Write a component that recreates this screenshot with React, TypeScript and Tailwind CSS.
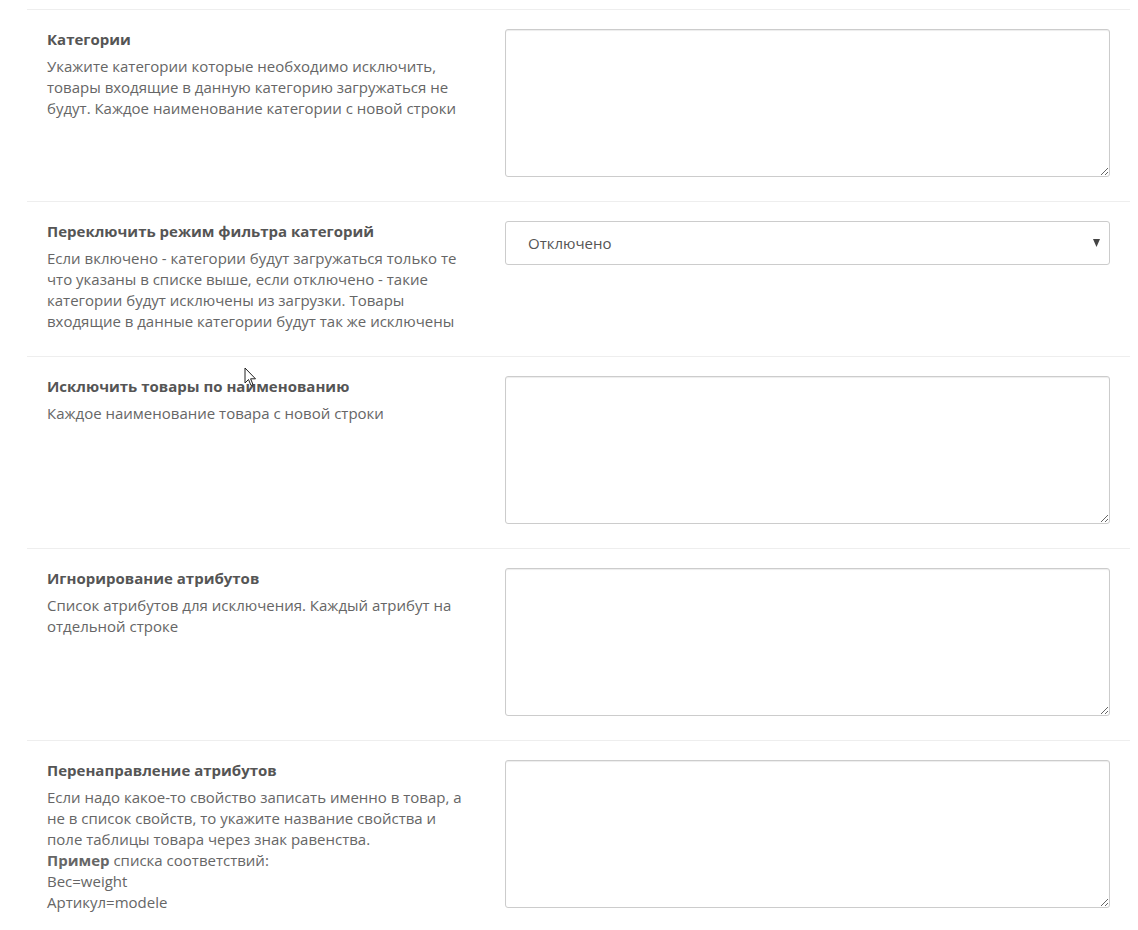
import React from 'react';

type Row = {
  title: string;
  description: React.ReactNode;
  field: 'textarea' | 'select';
};

const rows: Row[] = [
  {
    title: 'Категории',
    description:
      'Укажите категории которые необходимо исключить, товары входящие в данную категорию загружаться не будут. Каждое наименование категории с новой строки',
    field: 'textarea',
  },
  {
    title: 'Переключить режим фильтра категорий',
    description:
      'Если включено - категории будут загружаться только те что указаны в списке выше, если отключено - такие категории будут исключены из загрузки. Товары входящие в данные категории будут так же исключены',
    field: 'select',
  },
  {
    title: 'Исключить товары по наименованию',
    description: 'Каждое наименование товара с новой строки',
    field: 'textarea',
  },
  {
    title: 'Игнорирование атрибутов',
    description: 'Список атрибутов для исключения. Каждый атрибут на отдельной строке',
    field: 'textarea',
  },
  {
    title: 'Перенаправление атрибутов',
    description: (
      <>
        Если надо какое-то свойство записать именно в товар, а не в список свойств, то укажите название свойства и
        поле таблицы товара через знак равенства.
        <br />
        <b className="font-bold">Пример</b> списка соответствий:
        <br />
        Вес=weight
        <br />
        Артикул=modele
      </>
    ),
    field: 'textarea',
  },
];

const Cursor: React.FC = () => (
  <svg className="absolute left-[244px] top-[367px] pointer-events-none" width="13" height="20" viewBox="0 0 13 20">
    <path d="M1 1 L1 16 L4.5 12.5 L7 18.5 L9 17.6 L6.6 11.8 L11.5 11.8 Z" fill="#fff" stroke="#222" strokeWidth="1" strokeLinejoin="round" />
  </svg>
);

const App: React.FC = () => {
  return (
    <div className="relative min-h-[930px] bg-white pt-[9px] text-[15px] text-[#666]" style={{ fontFamily: '"Open Sans", "Liberation Sans", sans-serif' }}>
      <div className="ml-[27px] mr-[8px]">
        {rows.map((row, i) => (
          <div key={i} className="grid grid-cols-[458px_1fr] border-t border-[#eee] pt-[19px] pb-6">
            <div className="px-5">
              <div className="font-bold leading-[21px] text-[#555]">{row.title}</div>
              <div className="mt-[6px] leading-[21px]">{row.description}</div>
            </div>
            <div className="px-5">
              {row.field === 'textarea' ? (
                <textarea className="block h-[148px] w-full rounded-[3px] border border-[#ccc] bg-white px-3 py-2 shadow-[inset_0_1px_1px_rgba(0,0,0,0.075)] outline-none" />
              ) : (
                <div className="relative">
                  <select
                    defaultValue="off"
                    className="block h-[44px] w-full appearance-none rounded-[3px] border border-[#ccc] bg-white pl-[22px] pr-8 text-[15px] text-[#555] outline-none"
                  >
                    <option value="off">Отключено</option>
                    <option value="on">Включено</option>
                  </select>
                  <svg className="pointer-events-none absolute right-[10px] top-[18px]" width="7" height="8" viewBox="0 0 7 8">
                    <path d="M0 0 H7 L3.5 8 Z" fill="#444" />
                  </svg>
                </div>
              )}
            </div>
          </div>
        ))}
      </div>
      <Cursor />
    </div>
  );
};

export default App;
